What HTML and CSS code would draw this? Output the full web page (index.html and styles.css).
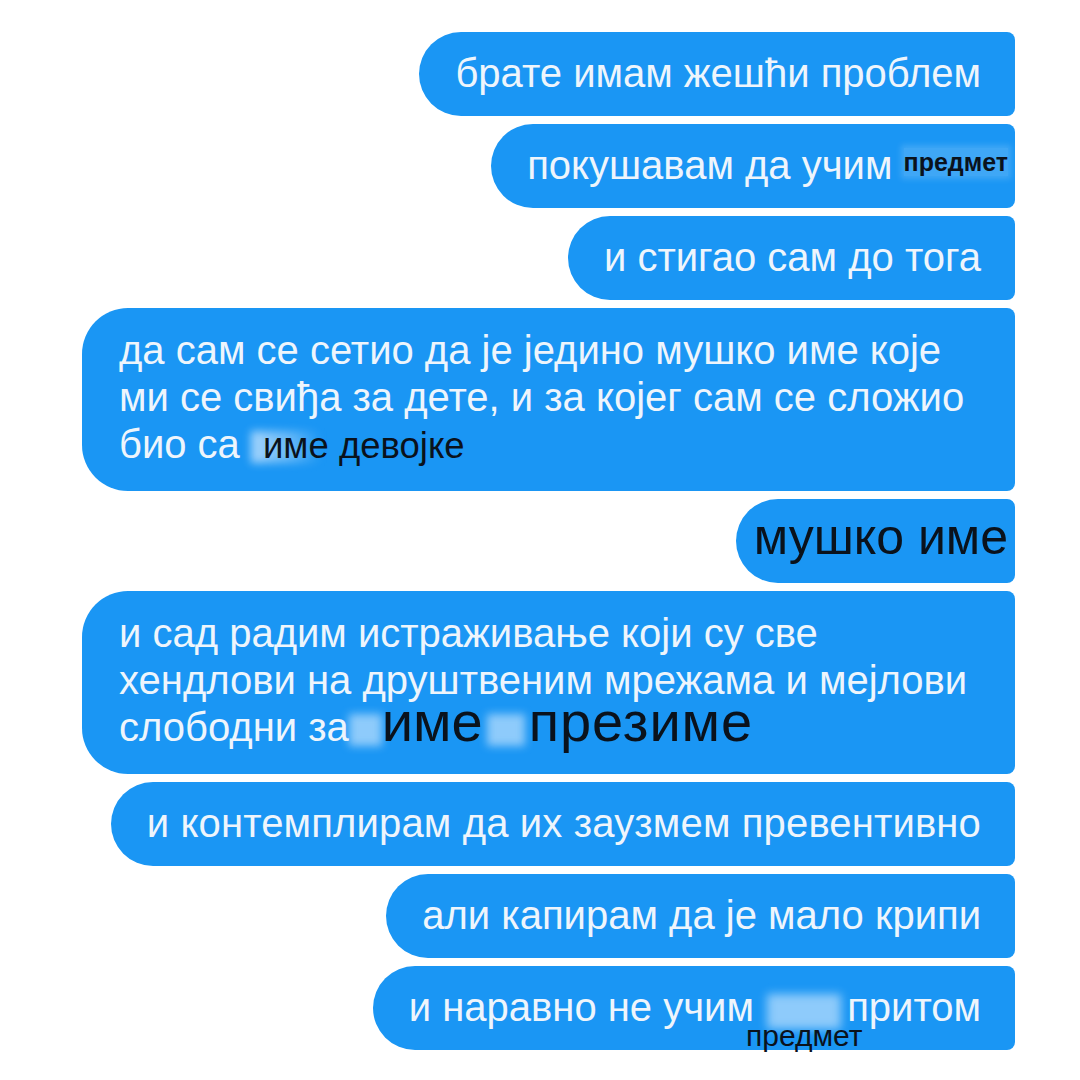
FILE: index.html
```html
<!DOCTYPE html>
<html lang="sr">
<head>
<meta charset="utf-8">
<link rel="stylesheet" href="styles.css">
</head>
<body>
<div class="chat">
  <div class="msg">брате имам жешћи проблем</div>
  <div class="msg m2">покушавам да учим <span class="tag tag-sm">предмет</span></div>
  <div class="msg">и стигао сам до тога</div>
  <div class="msg multi">да сам се сетио да је једино мушко име које<br>ми се свиђа за дете, и за којег сам се сложио<br>био са <span class="patch p1"></span><span class="tag tag-md">име девојке</span></div>
  <div class="msg m5"><span class="tag tag-lg">мушко име</span></div>
  <div class="msg multi">и сад радим истраживање који су све<br>хендлови на друштвеним мрежама и мејлови<br>слободни за<span class="patch p2"></span><span class="tag tag-xl">име</span><span class="patch p3"></span><span class="tag tag-xl tag-spread">презиме</span></div>
  <div class="msg wide">и контемплирам да их заузмем превентивно</div>
  <div class="msg">али капирам да је мало крипи</div>
  <div class="msg">и наравно не учим <span class="hole"><span class="hole-patch"></span><span class="tag tag-under">предмет</span></span> притом</div>
</div>
</body>
</html>
```

FILE: styles.css
```css
html, body {
  margin: 0;
  padding: 0;
  background: #ffffff;
}
body {
  width: 1080px;
  height: 1080px;
  overflow: hidden;
  font-family: "Liberation Sans", Arial, sans-serif;
}
.chat {
  display: flex;
  flex-direction: column;
  align-items: flex-end;
  gap: 8px;
  padding: 32px 65px 0 0;
}
.msg {
  box-sizing: border-box;
  background: #1a96f4;
  color: #eef5fc;
  font-size: 40px;
  line-height: 47px;
  height: 84px;
  padding: 18px 34px 19px 36px;
  border-radius: 42px 8px 8px 42px;
  white-space: nowrap;
}
.msg.multi {
  width: 933px;
  height: 183px;
  border-radius: 46px 8px 8px 46px;
  padding: 19px 34px 23px 37px;
}
.msg.wide {
  letter-spacing: 0.15px;
}
.m2 {
  padding-right: 7px;
}
.m5 {
  padding: 18px 7px 19px 18px;
}
.tag {
  color: #0a121c;
  position: relative;
}
.tag-sm {
  font-size: 25px;
  font-weight: bold;
  line-height: 30px;
  vertical-align: 8px;
  background: rgba(215, 235, 255, 0.2);
  box-shadow: 0 0 6px 3px rgba(215, 235, 255, 0.2);
}
.tag-md {
  font-size: 36.5px;
  line-height: 40px;
}
.tag-lg {
  font-size: 50px;
  line-height: 38px;
}
.tag-xl {
  font-size: 56px;
  line-height: 36px;
}
.tag-spread {
  letter-spacing: 0.9px;
}
.patch {
  display: inline-block;
  height: 32px;
  background: rgba(220, 238, 255, 0.6);
  filter: blur(4px);
  vertical-align: -5px;
}
.p1 {
  width: 70px;
  margin-right: -58px;
  background: linear-gradient(90deg, rgba(225, 240, 255, 0.7), rgba(225, 240, 255, 0.35) 60%, rgba(225, 240, 255, 0));
}
.p2 { width: 33px; margin-left: 0; }
.p3 { width: 38px; margin: 0 4px 0 4px; }
.hole {
  position: relative;
  display: inline-block;
  width: 71px;
  height: 0;
}
.hole-patch {
  position: absolute;
  left: 2px;
  top: -27px;
  width: 74px;
  height: 35px;
  background: rgba(220, 238, 255, 0.6);
  filter: blur(5px);
}
.tag-under {
  position: absolute;
  left: -19px;
  top: 0;
  font-size: 30px;
  line-height: 30px;
}
```
